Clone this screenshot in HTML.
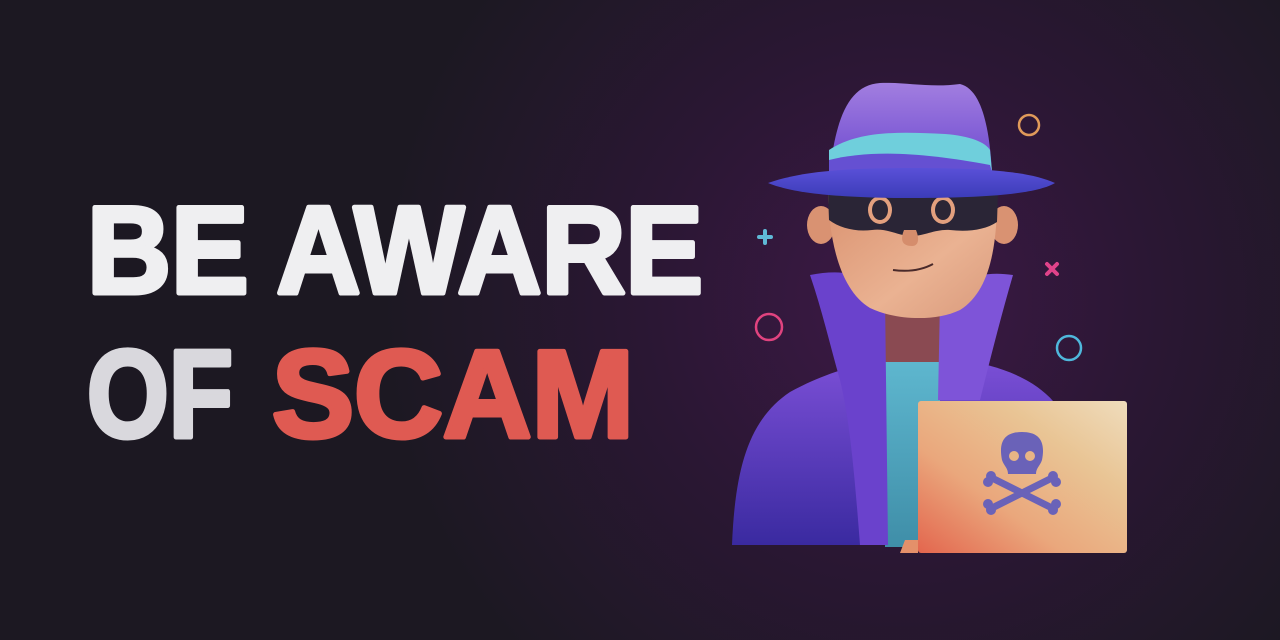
<!DOCTYPE html>
<html><head><meta charset="utf-8"><style>
html,body{margin:0;padding:0;width:1280px;height:640px;overflow:hidden;background:#1c1822}
svg{display:block}
</style></head><body>
<svg width="1280" height="640" viewBox="0 0 1280 640" xmlns="http://www.w3.org/2000/svg">
<defs>
<radialGradient id="bg" cx="900" cy="300" r="520" gradientUnits="userSpaceOnUse">
<stop offset="0" stop-color="#3d1846"/><stop offset="0.5" stop-color="#2a1733"/><stop offset="1" stop-color="#1c1822"/>
</radialGradient>
<linearGradient id="hat" x1="0" y1="0" x2="0" y2="1"><stop offset="0" stop-color="#a27ee0"/><stop offset="1" stop-color="#6b48cf"/></linearGradient>
<linearGradient id="brim" x1="0" y1="0" x2="0" y2="1"><stop offset="0" stop-color="#5a50d8"/><stop offset="1" stop-color="#3c3cb8"/></linearGradient>
<linearGradient id="coat" x1="0" y1="0" x2="0" y2="1"><stop offset="0" stop-color="#7b4fd6"/><stop offset="1" stop-color="#3a2aa0"/></linearGradient>
<linearGradient id="skin" x1="0" y1="0" x2="1" y2="1"><stop offset="0" stop-color="#d9906e"/><stop offset="0.6" stop-color="#eab292"/><stop offset="1" stop-color="#d99a7c"/></linearGradient>
<linearGradient id="lap" x1="0" y1="1" x2="1" y2="0"><stop offset="0" stop-color="#e3664e"/><stop offset="0.35" stop-color="#eaa77c"/><stop offset="0.7" stop-color="#e9c595"/><stop offset="1" stop-color="#efdcbc"/></linearGradient>
<linearGradient id="shirt" x1="0" y1="0" x2="0" y2="1"><stop offset="0" stop-color="#5fb8d0"/><stop offset="1" stop-color="#3f8ea8"/></linearGradient>
</defs>
<rect width="1280" height="640" fill="url(#bg)"/>

<g font-family="'Liberation Sans', sans-serif" font-weight="700" font-size="124" stroke-linejoin="round">
<text x="87" y="293" textLength="616" lengthAdjust="spacingAndGlyphs" fill="#efeff1" stroke="#efeff1" stroke-width="5">BE AWARE</text>
<text x="87" y="437" textLength="146" lengthAdjust="spacingAndGlyphs" fill="#d9d8dd" stroke="#d9d8dd" stroke-width="5">OF</text>
<text x="272" y="437" textLength="362" lengthAdjust="spacingAndGlyphs" fill="#df5a52" stroke="#df5a52" stroke-width="5">SCAM</text>
</g>

<circle cx="1029" cy="125" r="10" fill="none" stroke="#e09a5a" stroke-width="2.5"/>
<circle cx="769" cy="327" r="13" fill="none" stroke="#e0437f" stroke-width="2.5"/>
<circle cx="1069" cy="348" r="12" fill="none" stroke="#4fb8dc" stroke-width="2.5"/>
<path d="M759 237h12M765 231v12" stroke="#5fb9d6" stroke-width="4" stroke-linecap="round"/>
<path d="M1047 264l10 10M1057 264l-10 10" stroke="#e0438a" stroke-width="4" stroke-linecap="round"/>

<path d="M732 545 C735 470 748 420 790 392 C830 370 870 360 905 360 L960 360 C1000 365 1040 380 1060 410 L1080 545 Z" fill="url(#coat)"/>
<rect x="885" y="355" width="55" height="192" fill="url(#shirt)"/>
<path d="M885 290 L940 290 L940 362 L885 362 Z" fill="#8a4a52"/>
<path d="M810 275 C845 268 870 275 885 295 L888 545 L860 545 C855 480 850 420 840 380 C830 345 822 310 810 275 Z" fill="#6a42cc"/>
<path d="M1013 275 C980 270 955 280 940 300 L938 400 L980 400 C990 360 1000 320 1013 275 Z" fill="#7e54d8"/>
<ellipse cx="821" cy="225" rx="14" ry="19" fill="#d99272"/>
<ellipse cx="1004" cy="225" rx="14" ry="19" fill="#d99272"/>
<path d="M828 185 L997 185 C998 240 992 290 960 310 C935 322 895 320 870 308 C840 290 828 240 828 185 Z" fill="url(#skin)"/>
<path d="M828 192 L998 192 L997 222 C985 230 968 232 950 230 C935 229 925 236 912 236 C898 236 888 228 872 230 C855 232 840 228 829 220 Z" fill="#2a2536"/>
<ellipse cx="880" cy="210" rx="12" ry="14" fill="#e3a07e"/><ellipse cx="880" cy="210" rx="8" ry="10" fill="#2b2635"/>
<ellipse cx="943" cy="210" rx="12" ry="14" fill="#e3a07e"/><ellipse cx="943" cy="210" rx="8" ry="10" fill="#2b2635"/>
<path d="M904 230 C900 240 902 246 912 246 C918 246 920 240 916 230 Z" fill="#d58d6c"/>
<path d="M893 270 C908 272 922 270 933 264" stroke="#4a2a2a" stroke-width="2" fill="none"/>
<path d="M830 170 C836 120 848 85 880 83 C905 82 930 88 960 84 C985 90 990 140 992 172 Z" fill="url(#hat)"/>
<path d="M829 150 C860 130 900 132 945 134 C970 136 985 142 990 150 L992 172 L829 172 Z" fill="#6fcfdc"/>
<path d="M829 160 C870 150 920 152 990 165 L992 172 L829 172 Z" fill="#6550d2"/>
<path d="M768 183 C800 172 840 168 912 168 C990 168 1030 172 1055 183 C1040 192 1000 198 912 198 C830 198 790 192 768 183 Z" fill="url(#brim)"/>
<rect x="918" y="401" width="209" height="152" rx="3" fill="url(#lap)"/>
<path d="M905 540 L918 540 L918 553 L900 553 Z" fill="#e4906a"/>
<g fill="#6a62b8">
<path d="M1002 460 C998 440 1006 432 1022 432 C1038 432 1046 440 1042 460 C1040 466 1036 468 1036 474 L1008 474 C1008 468 1004 466 1002 460 Z"/>
<path d="M992 478 L1052 508 M1052 478 L992 508" stroke="#6a62b8" stroke-width="7" stroke-linecap="round"/>
<circle cx="988" cy="482" r="5"/><circle cx="991" cy="476" r="5"/><circle cx="1056" cy="482" r="5"/><circle cx="1053" cy="476" r="5"/>
<circle cx="988" cy="504" r="5"/><circle cx="991" cy="510" r="5"/><circle cx="1056" cy="504" r="5"/><circle cx="1053" cy="510" r="5"/>
</g>
<circle cx="1014" cy="456" r="5" fill="#e8b585"/><circle cx="1030" cy="456" r="5" fill="#e8b585"/>
</svg>
</body></html>
